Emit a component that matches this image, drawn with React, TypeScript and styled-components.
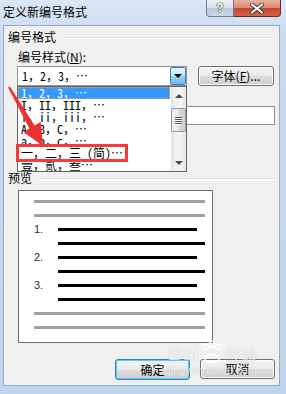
import React from "react";
import styled, { createGlobalStyle } from "styled-components";

const CJK = `"Noto Sans CJK SC", "Noto Sans", sans-serif`;
const MONO = `"Noto Sans Mono CJK SC", "Noto Sans CJK SC", monospace`;

const GlobalStyle = createGlobalStyle`
  html, body {
    margin: 0;
    padding: 0;
  }
  body {
    width: 286px;
    height: 394px;
    overflow: hidden;
    font-family: ${CJK};
    font-size: 12px;
  }
`;

const Window = styled.div`
  position: relative;
  width: 286px;
  height: 394px;
  display: flex;
  flex-direction: column;
  background: linear-gradient(#dbe7f5, #c8daf0 40px, #bfd4ee);
  overflow: hidden;
`;

const TitleBar = styled.div`
  height: 25px;
  flex-shrink: 0;
  display: flex;
  align-items: flex-start;
`;

const Title = styled.div`
  flex: 1;
  padding: 5px 0 0 3px;
  line-height: 14px;
  color: #000;
`;

const Caption = styled.div`
  display: flex;
  margin-right: 5px;
`;

const CaptionButton = styled.div<{ $close?: boolean }>`
  width: ${p => (p.$close ? 47 : 28)}px;
  height: 17px;
  box-sizing: border-box;
  display: flex;
  align-items: center;
  justify-content: center;
  border: 1px solid ${p => (p.$close ? "#6b2a20" : "#6f7c91")};
  border-top: none;
  border-left: ${p => (p.$close ? "none" : undefined)};
  border-radius: ${p => (p.$close ? "0 0 4px 0" : "0 0 0 4px")};
  background: ${p =>
    p.$close
      ? "linear-gradient(#eab1a2, #dc8b76 48%, #c5452c 52%, #d2644a)"
      : "linear-gradient(#eef2f7, #d7e0ea 48%, #bcc9d9 52%, #ccd8e6)"};
  font: bold 12px "Liberation Sans", sans-serif;
  color: #fff;
  text-shadow: 0 0 1px #333, 0 0 1px #333, 0 0 1px #333;
`;

const Body = styled.div`
  position: relative;
  flex: 1;
  margin: 0 6px 8px 3px;
  background: #f0f0f0;
  border: 1px solid #98aac0;
  display: flex;
  flex-direction: column;
`;

const GroupHeader = styled.div<{ $top: number }>`
  display: flex;
  align-items: center;
  gap: 6px;
  margin-top: ${p => p.$top}px;
  padding: 0 4px 0 4px;
  line-height: 14px;
  color: #000;
  &::after {
    content: "";
    flex: 1;
    height: 1px;
    background: #d5dfe5;
    box-shadow: 0 1px 0 #fff;
  }
`;

const Label = styled.div<{ $top: number }>`
  height: 14px;
  margin: ${p => p.$top}px 0 0 14px;
  line-height: 14px;
  color: #000;
`;

const Row = styled.div`
  display: flex;
  align-items: flex-start;
  margin: 2px 0 0 13px;
`;

const ComboWrap = styled.div<{ $width: number }>`
  position: relative;
  width: ${p => p.$width}px;
  height: 20px;
`;

const Combo = styled.div`
  box-sizing: border-box;
  height: 20px;
  display: flex;
  align-items: center;
  border: 1px solid #8e949c;
  background: #fff;
  font-family: ${MONO};
`;

const ComboText = styled.div`
  flex: 1;
  padding-left: 4px;
  line-height: 14px;
  white-space: nowrap;
`;

const Dots = styled.span`
  font-family: ${CJK};
  letter-spacing: 0;
`;

const DropButton = styled.div<{ $hot?: boolean }>`
  box-sizing: border-box;
  width: 16px;
  height: 18px;
  display: flex;
  align-items: center;
  justify-content: center;
  border: 1px solid ${p => (p.$hot ? "#3c7fb1" : "transparent")};
  border-radius: 2px;
  background: ${p => (p.$hot ? "linear-gradient(#e5f4fc, #c4e5f6 50%, #98d1ef 51%, #6cbbe6)" : "transparent")};
  &::after {
    content: "";
    border-left: 4px solid transparent;
    border-right: 4px solid transparent;
    border-top: 4px solid #000;
  }
`;

const DropList = styled.div`
  position: absolute;
  left: 0;
  top: 20px;
  width: 170px;
  height: 86px;
  box-sizing: border-box;
  border: 1px solid #646464;
  background: #fff;
  display: flex;
  z-index: 2;
  overflow: hidden;
`;

const Items = styled.div`
  flex: 1;
  min-width: 0;
`;

const ListItem = styled.div<{ $active?: boolean }>`
  height: 12px;
  line-height: 12px;
  padding-left: 3px;
  margin-right: 1px;
  white-space: nowrap;
  overflow: hidden;
  font-family: ${MONO};
  color: ${p => (p.$active ? "#fff" : "#000")};
  background: ${p => (p.$active ? "#3399ff" : "transparent")};
  outline: ${p => (p.$active ? "1px dotted #f0a040" : "none")};
  outline-offset: -1px;
`;

const ScrollBar = styled.div`
  width: 15px;
  display: flex;
  flex-direction: column;
  align-items: center;
  background: linear-gradient(90deg, #e3e3e3, #f2f2f2 30%, #f2f2f2 70%, #e6e6e6);
`;

const ScrollArrow = styled.div<{ $down?: boolean }>`
  height: 17px;
  width: 100%;
  display: flex;
  align-items: center;
  justify-content: center;
  &::after {
    content: "";
    border-left: 4px solid transparent;
    border-right: 4px solid transparent;
    ${p => (p.$down ? "border-top: 4px solid #4d4d4d;" : "border-bottom: 4px solid #4d4d4d;")}
  }
`;

const Thumb = styled.div`
  box-sizing: border-box;
  margin-top: 4px;
  width: 15px;
  height: 24px;
  border: 1px solid #979797;
  border-radius: 2px;
  background: linear-gradient(90deg, #f4f4f4, #e8e8e8 50%, #d6d6d6 51%, #cfcfcf);
  display: flex;
  flex-direction: column;
  align-items: center;
  justify-content: center;
  gap: 1px;
`;

const Grip = styled.div`
  width: 7px;
  height: 1px;
  background: #5a5a5a;
  box-shadow: 0 1px 0 #fff;
`;

const ScrollSpacer = styled.div`
  flex: 1;
`;

const PushButton = styled.div<{ $width: number; $default?: boolean }>`
  box-sizing: border-box;
  width: ${p => p.$width}px;
  height: ${p => (p.$default ? 21 : 20)}px;
  display: flex;
  align-items: center;
  justify-content: center;
  border: 1px solid ${p => (p.$default ? "#3c7fb1" : "#707070")};
  border-radius: 3px;
  background: linear-gradient(#f2f2f2, #ebebeb 48%, #dddddd 52%, #cfcfcf);
  box-shadow: inset 0 0 0 1px ${p => (p.$default ? "#48cfff" : "#fcfcfc")};
  line-height: 14px;
  color: #000;
`;

const TextBox = styled.div`
  box-sizing: border-box;
  width: 258px;
  height: 19px;
  margin: 2px 0 0 13px;
  border: 1px solid #8e8f8f;
  background: #fff;
`;

const PreviewBox = styled.div`
  box-sizing: border-box;
  width: 195px;
  height: 153px;
  margin: 5px 0 0 14px;
  padding: 9px 0 0 15px;
  border: 1px solid #6b6b6b;
  background: #fff;
  display: flex;
  flex-direction: column;
  gap: 11px;
`;

const PreviewLine = styled.div`
  height: 3px;
  display: flex;
  align-items: center;
`;

const Number = styled.div`
  width: 24px;
  height: 3px;
  font: 11px/3px "Liberation Sans", Arial, sans-serif;
  color: #2a2a3a;
`;

const Bar = styled.div<{ $width: number; $gray?: boolean }>`
  width: ${p => p.$width}px;
  height: 3px;
  background: ${p => (p.$gray ? "#a0a0a0" : "#000")};
`;

const Buttons = styled.div`
  display: flex;
  justify-content: flex-end;
  gap: 10px;
  margin-top: 16px;
  padding-right: 4px;
`;

const Annotation = styled.svg`
  position: absolute;
  left: 0;
  top: 0;
  width: 60px;
  height: 160px;
  z-index: 5;
  pointer-events: none;
`;

const Highlight = styled.div`
  position: absolute;
  left: 16px;
  top: 144px;
  width: 112px;
  height: 18px;
  box-sizing: border-box;
  border: 3px solid #f23b3b;
  z-index: 5;
`;

const Watermark = styled.div`
  position: absolute;
  left: 168px;
  top: 340px;
  z-index: 6;
  color: rgba(255, 255, 255, 0.75);
  text-shadow: 0 0 1px rgba(120, 120, 120, 0.45);
  pointer-events: none;
`;

const WmLogo = styled.div`
  display: flex;
  align-items: flex-end;
  gap: 2px;
  font: bold 20px/22px "Liberation Sans", sans-serif;
  span {
    font: 16px/18px ${CJK};
  }
`;

const WmUrl = styled.div`
  font: 11px/12px "Liberation Sans", sans-serif;
`;

const listStyles = [
  "1，2，3，",
  "I，II，III，",
  "i，ii，iii，",
  "A，B，C，",
  "a，b，c，",
  "一，二，三 (简)",
  "壹，贰，叁",
];

export default function App() {
  return (
    <Window>
      <GlobalStyle />
      <TitleBar>
        <Title>定义新编号格式</Title>
        <Caption>
          <CaptionButton>?</CaptionButton>
          <CaptionButton $close>
            <svg width="14" height="11" viewBox="0 0 14 11">
              <path d="M2 1.5 L12 9.5 M12 1.5 L2 9.5" stroke="#3a3a3a" strokeWidth="4" strokeLinecap="round" />
              <path d="M2 1.5 L12 9.5 M12 1.5 L2 9.5" stroke="#fff" strokeWidth="2.2" strokeLinecap="round" />
            </svg>
          </CaptionButton>
        </Caption>
      </TitleBar>
      <Body>
        <GroupHeader $top={4}>编号格式</GroupHeader>
        <Label $top={6}>
          编号样式(<u>N</u>):
        </Label>
        <Row>
          <ComboWrap $width={170}>
            <Combo>
              <ComboText>
                1，2，3，<Dots lang="zh-CN">…</Dots>
              </ComboText>
              <DropButton $hot />
            </Combo>
            <DropList>
              <Items>
                {listStyles.map((s, i) => (
                  <ListItem key={s} $active={i === 0}>
                    {s}
                    <Dots lang="zh-CN">…</Dots>
                  </ListItem>
                ))}
              </Items>
              <ScrollBar>
                <ScrollArrow />
                <Thumb>
                  <Grip />
                  <Grip />
                  <Grip />
                  <Grip />
                </Thumb>
                <ScrollSpacer />
                <ScrollArrow $down />
              </ScrollBar>
            </DropList>
          </ComboWrap>
          <PushButton $width={76} style={{ marginLeft: 11 }}>
            字体(<u>F</u>)...
          </PushButton>
        </Row>
        <Label $top={4} />
        <TextBox />
        <Label $top={4} />
        <Row>
          <ComboWrap $width={100}>
            <Combo>
              <ComboText />
              <DropButton />
            </Combo>
          </ComboWrap>
        </Row>
        <GroupHeader $top={6}>预览</GroupHeader>
        <PreviewBox>
          <PreviewLine>
            <Bar $gray $width={171} />
          </PreviewLine>
          <PreviewLine>
            <Bar $gray $width={171} />
          </PreviewLine>
          {["1.", "2.", "3."].map(n => (
            <React.Fragment key={n}>
              <PreviewLine>
                <Number>{n}</Number>
                <Bar $width={139} />
              </PreviewLine>
              <PreviewLine>
                <Number />
                <Bar $width={147} />
              </PreviewLine>
            </React.Fragment>
          ))}
          <PreviewLine>
            <Bar $gray $width={171} />
          </PreviewLine>
          <PreviewLine>
            <Bar $gray $width={171} />
          </PreviewLine>
        </PreviewBox>
        <Buttons>
          <PushButton $width={75} $default>
            确定
          </PushButton>
          <PushButton $width={75}>取消</PushButton>
        </Buttons>
      </Body>
      <Highlight />
      <Annotation viewBox="0 0 60 160">
        <polygon
          points="9.9,86.5 34.6,125.5 40.6,121.9 43,146 23.4,132.1 29.4,128.5 8.1,87.5"
          fill="#ee3030"
        />
      </Annotation>
      <Watermark>
        <WmLogo>
          Bai
          <svg width="22" height="24" viewBox="0 0 22 24">
            <g fill="none" stroke="rgba(255,255,255,0.8)" strokeWidth="2">
              <ellipse cx="5" cy="7" rx="2.5" ry="3" />
              <ellipse cx="11" cy="4" rx="2.5" ry="3" />
              <ellipse cx="17" cy="7" rx="2.5" ry="3" />
              <path d="M4 20 C4 13 18 13 18 20 C18 23 4 23 4 20 Z" />
            </g>
          </svg>
          <span>经验</span>
        </WmLogo>
        <WmUrl>jingyan.baidu.com</WmUrl>
      </Watermark>
    </Window>
  );
}
